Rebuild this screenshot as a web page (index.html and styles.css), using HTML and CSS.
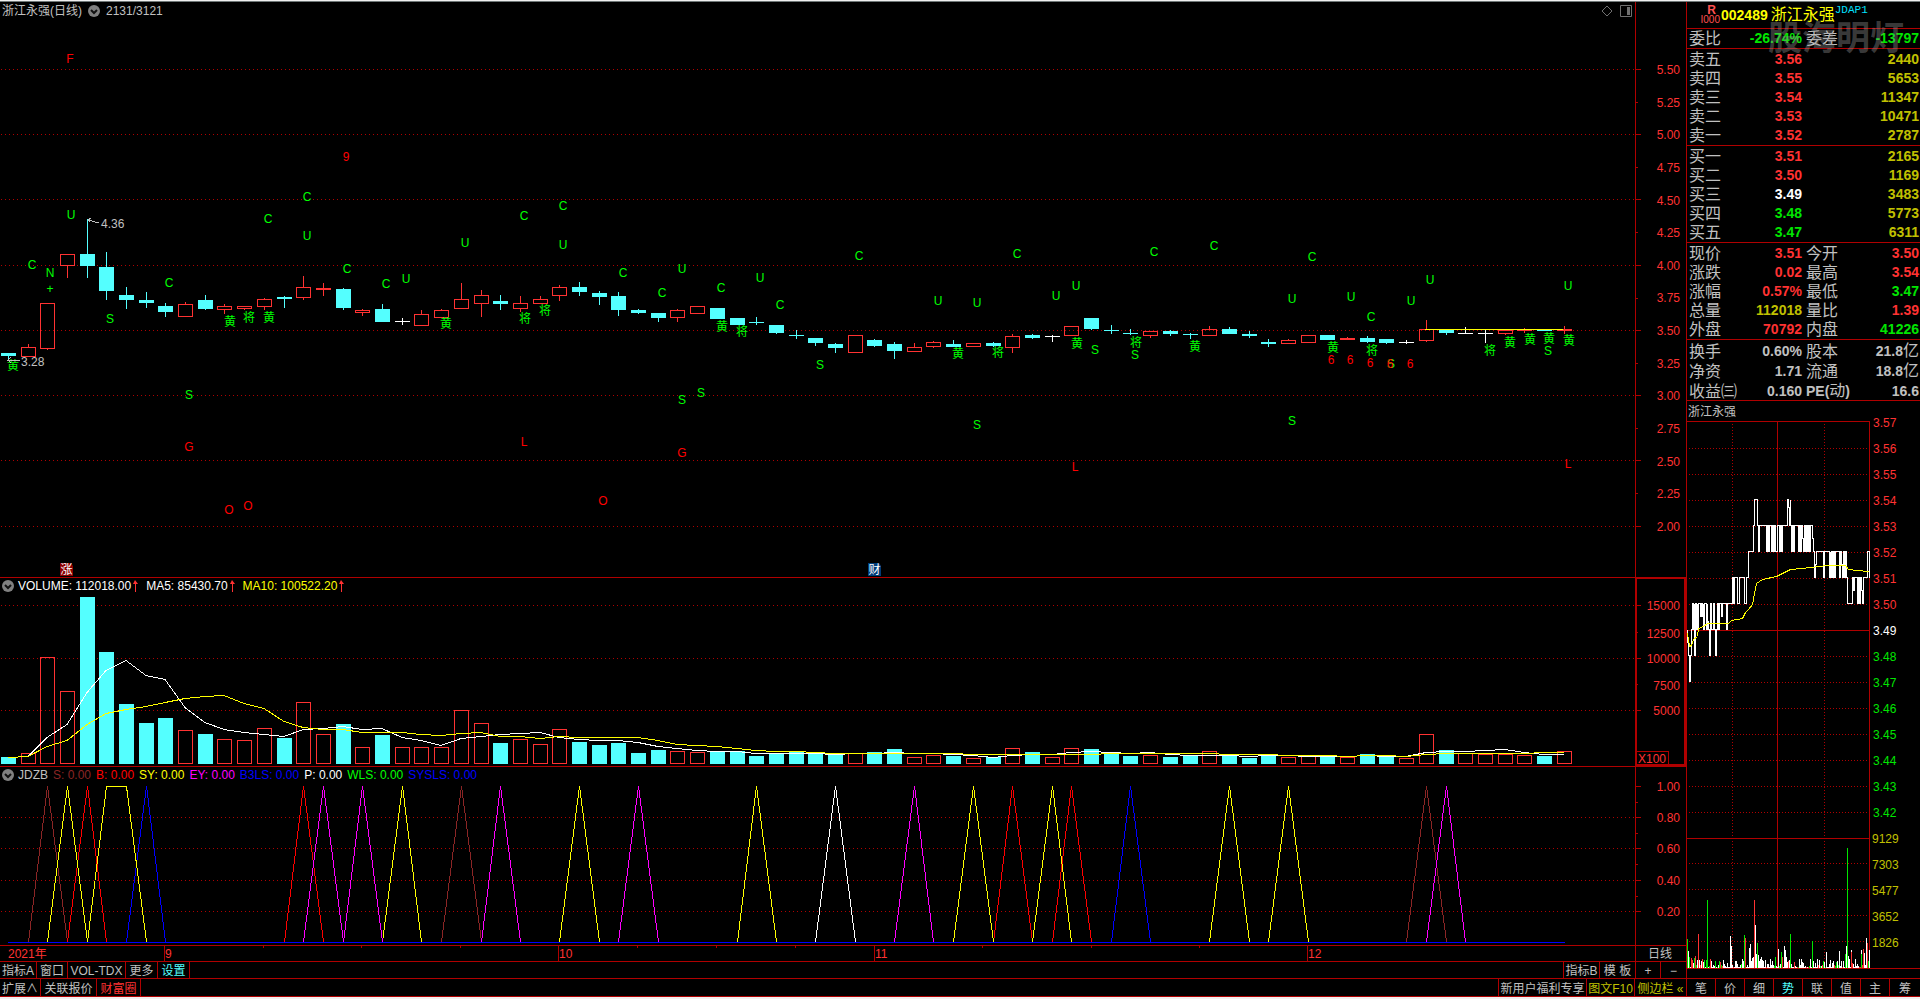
FILE: index.html
```html
<!DOCTYPE html>
<html lang="zh-CN">
<head>
<meta charset="utf-8">
<title>浙江永强 002489</title>
<link rel="stylesheet" href="styles.css">
</head>
<body>
<div class="app">
  <main class="charts">
    <section class="panel">
      <svg id="kline" class="plot" viewBox="0 2 1686 575" preserveAspectRatio="none"></svg>
      <header class="panel-head head-main">
        <span>浙江永强(日线)</span>
        <button class="toggle" aria-label="展开"><svg viewBox="0 0 12 12"><circle cx="6" cy="6" r="6"/><path d="M3 5l3 3 3-3"/></svg></button>
        <span>2131/3121</span>
        <span class="tools">
          <svg viewBox="0 0 12 12"><path d="M6 1l5 5-5 5-5-5z"/></svg>
          <svg viewBox="0 0 12 12"><path d="M.5.5h11v11H.5z"/><path class="solid" d="M7 2h3v8H7z"/></svg>
        </span>
      </header>
    </section>
    <section class="panel">
      <svg id="volume" class="plot" viewBox="0 577 1686 189" preserveAspectRatio="none"></svg>
      <header class="panel-head">
        <button class="toggle" aria-label="展开"><svg viewBox="0 0 12 12"><circle cx="6" cy="6" r="6"/><path d="M3 5l3 3 3-3"/></svg></button>
        <span class="white">VOLUME: 112018.00<svg class="up" viewBox="0 0 5 12"><path d="M2 0L5 4H3v8H2V4H0z"/></svg></span>
        <span class="white next">MA5: 85430.70<svg class="up" viewBox="0 0 5 12"><path d="M2 0L5 4H3v8H2V4H0z"/></svg></span>
        <span class="yellow next">MA10: 100522.20<svg class="up" viewBox="0 0 5 12"><path d="M2 0L5 4H3v8H2V4H0z"/></svg></span>
      </header>
    </section>
    <section class="panel">
      <svg id="signal" class="plot" viewBox="0 766 1686 179" preserveAspectRatio="none"></svg>
      <header class="panel-head">
        <button class="toggle" aria-label="展开"><svg viewBox="0 0 12 12"><circle cx="6" cy="6" r="6"/><path d="M3 5l3 3 3-3"/></svg></button>
        <span>JDZB</span>
        <span class="brown">S: 0.00</span><span class="hot">B: 0.00</span><span class="yellow">SY: 0.00</span><span class="magenta">EY: 0.00</span><span class="blue">B3LS: 0.00</span><span class="white">P: 0.00</span><span class="lime">WLS: 0.00</span><span class="blue">SYSLS: 0.00</span>
      </header>
    </section>
    <section class="panel">
      <svg id="dates" class="plot" viewBox="0 945 1686 16" preserveAspectRatio="none"></svg>
    </section>
    <nav class="bar bar-a">
      <button class="w37">指标A</button><button class="w31">窗口</button><button class="w58">VOL-TDX</button><button class="w32">更多</button><button class="w32 cyan">设置</button>
      <span class="fill"></span>
      <button class="w36">指标B</button><button class="w36">模 板</button><button class="w25">+</button><button class="w25 last">−</button>
    </nav>
    <nav class="bar bar-b">
      <button class="w41">扩展∧</button><button class="w56">关联报价</button><button class="w44 red">财富圈</button>
      <span class="fill"></span>
      <button class="w88">新用户福利专享</button><button class="w48 gold">图文F10</button><button class="w51 gold last">侧边栏 «</button>
    </nav>
  </main>

  <aside class="quote">
    <header class="stock">
      <span class="flag"><b>R</b><small>I000</small></span>
      <b class="code">002489</b><span class="name">浙江永强</span><span class="tag">JDAP1</span>
      <span class="mark">股海明灯</span>
    </header>
    <table class="rows one">
      <tr><th>委比</th><td class="green">-26.74%</td><th>委差</th><td class="green">-13797</td></tr>
    </table>
    <table class="rows">
      <tr><th>卖五</th><td class="red">3.56</td><th></th><td class="gold">2440</td></tr>
      <tr><th>卖四</th><td class="red">3.55</td><th></th><td class="gold">5653</td></tr>
      <tr><th>卖三</th><td class="red">3.54</td><th></th><td class="gold">11347</td></tr>
      <tr><th>卖二</th><td class="red">3.53</td><th></th><td class="gold">10471</td></tr>
      <tr><th>卖一</th><td class="red">3.52</td><th></th><td class="gold">2787</td></tr>
    </table>
    <table class="rows">
      <tr><th>买一</th><td class="red">3.51</td><th></th><td class="gold">2165</td></tr>
      <tr><th>买二</th><td class="red">3.50</td><th></th><td class="gold">1169</td></tr>
      <tr><th>买三</th><td class="white">3.49</td><th></th><td class="gold">3483</td></tr>
      <tr><th>买四</th><td class="green">3.48</td><th></th><td class="gold">5773</td></tr>
      <tr><th>买五</th><td class="green">3.47</td><th></th><td class="gold">6311</td></tr>
    </table>
    <table class="rows">
      <tr><th>现价</th><td class="red">3.51</td><th>今开</th><td class="red">3.50</td></tr>
      <tr><th>涨跌</th><td class="red">0.02</td><th>最高</th><td class="red">3.54</td></tr>
      <tr><th>涨幅</th><td class="red">0.57%</td><th>最低</th><td class="green">3.47</td></tr>
      <tr><th>总量</th><td class="gold">112018</td><th>量比</th><td class="red">1.39</td></tr>
      <tr><th>外盘</th><td class="red">70792</td><th>内盘</th><td class="green">41226</td></tr>
    </table>
    <table class="rows">
      <tr><th>换手</th><td>0.60%</td><th>股本</th><td>21.8<i>亿</i></td></tr>
      <tr><th>净资</th><td>1.71</td><th>流通</th><td>18.8<i>亿</i></td></tr>
      <tr><th>收益㈢</th><td>0.160</td><th><b>PE(</b>动<b>)</b></th><td>16.6</td></tr>
    </table>
    <h2 class="mini-title">浙江永强</h2>
    <div class="mini"><svg id="intraday" class="plot" viewBox="1687 421 233 557" preserveAspectRatio="none"></svg></div>
    <nav class="bar bar-b tabs">
      <button>笔</button><button>价</button><button>细</button><button class="cyan">势</button><button>联</button><button>值</button><button>主</button><button class="last">筹</button>
    </nav>
  </aside>
</div>
<script src="app.js"></script>
</body>
</html>
```
FILE: styles.css
```css
* { box-sizing: border-box; }
body {
  margin: 0;
  padding: 1px 0 2px;
  height: 100vh;
  background: #f0f0f0;
  color: #c0c0c0;
  font: 12px/16px "Liberation Sans", "Noto Sans CJK SC", sans-serif;
}
.app {
  height: 100%;
  display: grid;
  grid-template-columns: minmax(0, 1fr) 234px;
  background: #000;
  border-top: 1px solid #707878;
}
.charts {
  display: grid;
  min-height: 0;
  grid-template-rows: minmax(0, 575fr) minmax(0, 189fr) minmax(0, 179fr) 16px 17px 19px;
}
.panel { display: grid; min-height: 0; }
.panel > * { grid-area: 1 / 1; }
.plot { display: block; width: 100%; height: 100%; min-height: 0; overflow: hidden; }
.mini .plot { overflow: visible; }
.panel-head {
  display: flex;
  align-items: center;
  align-self: start;
  gap: 5px;
  height: 18px;
  padding: 0 4px 0 2px;
  white-space: nowrap;
}
.head-main { gap: 6px; }
.toggle {
  width: 12px;
  height: 12px;
  flex: none;
  padding: 0;
  border: 0;
  background: none;
}
.panel-head .toggle { margin-right: -1px; }
.head-main .toggle { margin: 0; }
.toggle svg { display: block; fill: #808080; }
.toggle path { fill: none; stroke: #111; stroke-width: 2; }
.next { margin-left: 3px; }
.up { width: 5px; height: 12px; margin-left: 2px; vertical-align: -2px; fill: #ff3232; }
.tools { display: flex; gap: 7px; margin-left: auto; margin-right: 50px; }
.tools svg { width: 12px; height: 12px; fill: none; stroke: #707070; }
.tools .solid { fill: #707070; stroke: none; }

.white { color: #fff; }
.yellow { color: #ff0; }
.brown { color: #8b2525; }
.hot { color: #f00; }
.magenta { color: #f0f; }
.blue { color: #00f; }
.lime { color: #0f0; }
.red { color: #ff3232; }
.green { color: #00e600; }
.gold { color: #c0c000; }
.cyan { color: #54ffff; }

.bar { display: flex; border-top: 1px solid #b00000; }
.bar-b { border-bottom: 1px solid #b00000; }
.bar button {
  flex: none;
  padding: 1px 0 0;
  border: 0;
  border-right: 1px solid #b00000;
  background: none;
  color: #c0c0c0;
  font: inherit;
  white-space: nowrap;
}
.bar-b button { padding-top: 2px; }
.bar .cyan { color: #54ffff; }
.bar .red { color: #ff3232; }
.bar .gold { color: #c0c000; }
.bar .last { border-right: 0; }
.fill { flex: 1; border-right: 1px solid #b00000; }
.w25 { width: 25px; }
.w31 { width: 31px; }
.w32 { width: 32px; }
.w36 { width: 36px; }
.w37 { width: 37px; }
.w41 { width: 41px; }
.w44 { width: 44px; }
.w48 { width: 48px; }
.w51 { width: 51px; }
.w56 { width: 56px; }
.w58 { width: 58px; }
.w88 { width: 88px; }

.quote {
  display: grid;
  min-height: 0;
  grid-template-rows: 26px 20px 97px 97px 97px 61px 21px minmax(0, 1fr) 19px;
  align-items: start;
  border-left: 1px solid #b00000;
}
.stock {
  position: relative;
  display: flex;
  align-items: center;
  height: 26px;
  padding-left: 17px;
  color: #ff0;
  font-size: 16px;
}
.flag { display: flex; flex-direction: column; width: 16px; color: #ff5050; line-height: 10px; text-align: right; }
.flag b { font-size: 12px; padding-right: 4px; }
.flag small { font-size: 10px; margin-left: -6px; }
.code { font-size: 14px; margin-left: 1px; }
.name { margin-left: 3px; }
.tag { align-self: start; color: #00e0ff; font: 11px/16px "Liberation Mono", monospace; }
.mark {
  position: absolute;
  top: 14px;
  right: 16px;
  color: rgba(150, 150, 150, .4);
  font: bold 34px/40px "Noto Sans CJK SC", sans-serif;
}
.rows {
  width: 100%;
  table-layout: fixed;
  border-collapse: separate;
  border-spacing: 0;
  border-top: 1px solid #b00000;
  padding-top: 1px;
  font-size: 14px;
  line-height: 19px;
}
.rows.one { padding-top: 0; }
.rows th, .rows td { height: 19px; padding: 0; white-space: nowrap; overflow: visible; }
.rows th { width: 54px; padding-left: 2px; text-align: left; font-weight: normal; font-size: 16px; }
.rows th:first-child { width: 50px; }
.rows th b { font-size: 14px; }
.rows td { text-align: right; font-weight: bold; padding-right: 1px; }
.rows td:nth-child(2) { width: 66px; }
.rows th:nth-child(3) { padding-left: 3px; }
.rows i { font: 16px "Noto Sans CJK SC", sans-serif; line-height: 16px; }
.mini-title {
  margin: 0;
  padding: 2px 0 0 1px;
  border-top: 1px solid #b00000;
  font: inherit;
  line-height: 18px;
}
.mini { min-height: 0; height: 100%; }
.tabs { height: 19px; }
.tabs button { flex: 29 1 0; }
.tabs .last { flex-grow: 31; }

svg text { font: 12px "Liberation Sans", "Noto Sans CJK SC", sans-serif; }
svg .mid { text-anchor: middle; }
svg .end { text-anchor: end; }
.shape { shape-rendering: crispEdges; fill: none; }
```
FILE: app.js
```js
const NS = 'http://www.w3.org/2000/svg';
const LINE = '#b00000', RED = '#ff3232', CYAN = '#54ffff', WHITE = '#fff', YELLOW = '#ff0', GREY = '#c0c0c0';

function add(svg, tag, attrs, text) {
  const el = document.createElementNS(NS, tag);
  for (const k in attrs) el.setAttribute(k, attrs[k]);
  if (text !== undefined) el.textContent = text;
  svg.appendChild(el);
  return el;
}
const fillRect = (s, x, y, w, h, c) => add(s, 'rect', { x, y, width: w, height: h, class: 'shape', style: `fill:${c}` });
const boxRect = (s, x, y, w, h, c) => add(s, 'rect', { x: x + .5, y: y + .5, width: w - 1, height: h - 1, stroke: c, class: 'shape' });
const poly = (s, pts, c) => add(s, 'polyline', { points: pts.map(p => p.join()).join(' '), stroke: c, class: 'shape' });
const label = (s, x, y, t, c, cls) => add(s, 'text', { x, y: y + 4.5, fill: c, class: cls || '' }, t);
const dotsH = (s, x1, x2, y, step = 4) => add(s, 'line', { x1, x2, y1: y + .5, y2: y + .5, stroke: LINE, 'stroke-dasharray': `1 ${step - 1}`, class: 'shape' });
const dotsV = (s, x, y1, y2) => add(s, 'line', { x1: x + .5, x2: x + .5, y1, y2, stroke: LINE, 'stroke-dasharray': '1 2', class: 'shape' });
const cx = i => Math.floor(8.32 + 19.695 * i);
const AX = 1635;

/* kind, body top, body bottom, wick high, wick low, volume top */
const bars = [
  ['c',353,356,353,359,757],['r',347,357,344,357,753],['r',303,349,303,350,657],['r',254,266,254,278,691],
  ['c',254,266,219,278,597],['c',267,291,252,300,652],['c',295,300,287,309,704],['c',300,303,292,308,723],
  ['c',306,312,303,317,718],['r',304,317,302,317,730],['c',300,309,295,310,734],['r',306,310,304,314,739],
  ['r',306,309,306,310,740],['r',299,307,298,310,728],['c',297,299,296,308,738],['r',287,298,276,300,702],
  ['r',288,290,283,296,734],['c',289,308,288,310,724],['r',310,313,309,316,747],['c',309,322,304,322,735],
  ['w',321,322,318,325,747],['r',314,326,310,326,747],['r',310,318,309,318,747],['r',299,309,283,309,710],
  ['r',295,304,290,317,723],['c',301,304,295,310,743],['r',303,309,296,312,739],['r',299,304,296,304,744],
  ['r',287,296,285,301,729],['c',287,292,282,296,742],['c',293,297,291,305,745],['c',296,310,292,316,743],
  ['c',310,313,309,314,753],['c',313,318,313,322,750],['r',310,318,309,322,751],['r',306,314,306,314,752],
  ['c',308,319,308,319,751],['c',318,325,318,325,751],['c',322,323,317,325,756],['c',325,333,325,334,753],
  ['c',335,336,330,339,751],['c',338,343,338,346,753],['c',344,348,343,353,755],['r',335,353,335,353,753],
  ['c',340,346,339,347,752],['c',344,351,342,359,749],['r',347,352,343,352,757],['r',342,347,341,348,755],
  ['c',344,347,340,347,756],['r',343,347,343,347,758],['c',343,346,342,347,757],['r',336,348,334,353,748],
  ['c',335,338,334,339,752],['w',336,337,335,342,757],['r',326,336,326,336,748],['c',318,329,318,330,749],
  ['c',330,331,325,334,753],['c',333,334,329,335,756],['r',331,336,331,338,755],['c',331,334,330,336,757],
  ['c',334,335,333,339,755],['r',329,336,326,336,751],['c',329,334,327,334,755],['c',334,336,331,338,758],
  ['c',342,344,339,347,755],['r',340,344,339,344,757],['r',335,343,335,343,756],['c',335,340,335,340,756],
  ['r',338,340,337,340,757],['c',338,342,336,343,754],['c',339,343,339,344,757],['w',342,343,340,344,758],
  ['r',329,341,320,342,734],['c',330,333,330,335,750],['w',333,334,327,334,753],['w',333,334,330,343,754],
  ['r',330,334,330,335,754],['r',330,331,328,333,755],['c',330,331,329,331,756],['r',329,331,326,334,751]
];

/* ---- price panel ---- */
(function () {
  const s = document.getElementById('kline');
  [69,134,199,265,330,395,460,526].forEach(y => { dotsH(s, 1, AX, y); fillRect(s, AX, y, 6, 1, LINE); });
  [102,167,232,298,363,428,493].forEach(y => fillRect(s, AX, y, 3, 1, LINE));
  fillRect(s, AX, 2, 1, 575, LINE);
  ['5.50','5.25','5.00','4.75','4.50','4.25','4.00','3.75','3.50','3.25','3.00','2.75','2.50','2.25','2.00']
    .forEach((t, k) => label(s, 1680, 69.5 + k * 32.64, t, RED, 'end'));
  bars.forEach(([k, t, b, h, l], i) => {
    const x = cx(i), c = k === 'c' ? CYAN : k === 'w' ? WHITE : RED;
    if (h < t) fillRect(s, x, h, 1, t - h, c);
    if (l > b) fillRect(s, x, b, 1, l - b, c);
    if (k === 'r' && b - t > 2) boxRect(s, x - 7, t, 15, b - t, c);
    else fillRect(s, x - 7, t, 15, b - t, c);
  });
  fillRect(s, 1425, 329, 138, 1, YELLOW);
  const marks = {
    '#f00': 'F 70 59|9 346 157|G 189 447|O 229 510|O 248 506|L 524 442|G 682 453|O 603 501|L 1075 467|6 1331 360|6 1350 360|6 1370 363|6 1390 364|6 1410 364|L 1568 464',
    '#0f0': 'C 307 197|C 268 219|U 307 236|U 71 215|C 32 265|N 50 273|+ 50 289|C 169 283|C 347 269|C 386 284|U 406 279|U 465 243|C 524 216|S 110 319|S 189 395|黄 230 321|将 249 317|黄 269 317|黄 446 323|将 525 318|将 545 310|黄 13 365|C 563 206|U 563 245|C 623 273|U 682 269|C 662 293|C 721 288|U 760 278|C 780 305|C 859 256|C 1017 254|U 938 301|U 977 303|U 1056 296|U 1076 286|黄 722 326|将 742 331|S 820 365|S 682 400|S 701 393|S 977 425|黄 958 353|将 998 352|黄 1077 343|S 1095 350|C 1154 252|C 1214 246|C 1312 257|U 1292 299|U 1351 297|C 1371 317|U 1411 301|U 1430 280|U 1568 286|将 1136 342|S 1135 355|黄 1195 346|黄 1333 347|将 1372 350|将 1490 350|黄 1510 342|黄 1530 339|黄 1549 338|S 1548 351|黄 1569 340|S 1391 364|S 1292 421'
  };
  for (const c of ['#0f0', '#f00']) marks[c].split('|').forEach(m => {
    const [t, x, y] = m.split(' ');
    label(s, +x, y - (t < '~' ? 1 : 0), t, c, 'mid');
  });
  label(s, 101, 223.5, '4.36', GREY);
  label(s, 21, 361, '3.28', GREY);
  poly(s, [[91,218],[88,220],[99,223]], GREY);
  poly(s, [[88,220],[90,222]], GREY);
  poly(s, [[11,357],[8,360],[20,360]], GREY);
  poly(s, [[8,360],[11,363]], GREY);
  add(s, 'path', { d: 'M60 563h11l2 3v10H60z', fill: '#8b0000' });
  label(s, 66.5, 569.5, '涨', WHITE, 'mid');
  add(s, 'path', { d: 'M868 563h11l2 3v10h-13z', fill: '#003c78' });
  label(s, 874.5, 569.5, '财', WHITE, 'mid');
})();

/* ---- volume panel ---- */
(function () {
  const s = document.getElementById('volume');
  fillRect(s, 0, 577, 1686, 1, LINE);
  [605,658,710].forEach(y => { dotsH(s, 1, AX, y); fillRect(s, AX, y, 6, 1, LINE); });
  [632,684].forEach(y => fillRect(s, AX, y, 3, 1, LINE));
  bars.forEach(([k,,,,, v], i) => {
    const x = cx(i) - 7;
    if (k === 'c') fillRect(s, x, v, 15, 764 - v, CYAN); else boxRect(s, x, v, 15, 764 - v, RED);
  });
  const ma5 = [757,756,737,724,692,670,660,675,679,707,722,729,732,734,736,729,728,726,729,728,737,740,745,738,736,734,733,732,737,739,740,740,742,746,748,750,751,751,753,753,753,753,754,753,753,752,753,753,754,755,757,755,754,754,752,751,752,753,752,754,755,755,755,756,755,755,756,756,756,755,756,756,752,751,751,750,749,752,754,754];
  const ma10 = [757,756,746,740,724,713,709,706,702,698,696,695,703,708,721,727,729,729,732,732,732,734,735,733,732,736,736,738,736,737,737,737,737,740,744,745,746,748,750,751,751,752,753,753,753,753,753,753,753,754,754,754,754,754,754,754,753,753,753,753,753,753,754,754,754,755,755,755,756,755,755,756,754,753,753,753,753,753,752,752];
  poly(s, ma5.map((y, i) => [cx(i), y + .5]), WHITE);
  poly(s, ma10.map((y, i) => [cx(i), y + .5]), YELLOW);
  fillRect(s, AX, 577, 2, 189, LINE);
  fillRect(s, 1684, 577, 2, 189, LINE);
  fillRect(s, AX, 577, 51, 2, LINE);
  fillRect(s, AX, 764, 51, 2, LINE);
  [['15000',605.5],['12500',633.5],['10000',658.5],['7500',685.5],['5000',710.5]].forEach(([t, y]) => label(s, 1680, y, t, RED, 'end'));
  boxRect(s, 1636, 751, 33, 15, LINE);
  label(s, 1638, 758.5, 'X100', RED);
})();

/* ---- signal panel ---- */
(function () {
  const s = document.getElementById('signal');
  fillRect(s, 0, 766, 1686, 1, LINE);
  fillRect(s, AX, 766, 1, 179, LINE);
  [817,848,880,911].forEach(y => dotsH(s, 1, AX, y));
  [786,817,848,880,911].forEach((y, k) => {
    fillRect(s, AX, y, 6, 1, LINE);
    if (k < 4) fillRect(s, AX, y + 16, 3, 1, LINE);
    label(s, 1680, y + .5, ['1.00','0.80','0.60','0.40','0.20'][k], RED, 'end');
  });
  const peaks = [
    ['#8b2525', [2,23,72]], ['#f00', [4,15,51,54]], ['#ff0', [3,20,29,38,49,53,62,65]],
    ['#f0f', [16,18,25,32,46,73]], ['#00f', [7,57]], ['#fff', [42]]
  ];
  peaks.forEach(([c, list]) => list.forEach(i => poly(s, [[cx(i - 1) + .5, 942], [cx(i) + .5, 786], [cx(i + 1) + .5, 942]], c)));
  poly(s, [[cx(4) + .5, 942], [cx(5) + .5, 786.5], [cx(6) + .5, 786.5], [cx(7) + .5, 942]], '#ff0');
  fillRect(s, 8, 942, 1557, 1, '#00f');
})();

/* ---- date axis ---- */
(function () {
  const s = document.getElementById('dates');
  fillRect(s, 0, 945, 1686, 1, LINE);
  fillRect(s, AX, 945, 1, 16, LINE);
  [263,361,460,637,716,795,982,1091,1199].forEach(x => fillRect(s, x, 946, 1, 2, LINE));
  [[164,'9'],[558,'10'],[874,'11'],[1307,'12']].forEach(([x, t]) => { fillRect(s, x, 946, 1, 15, LINE); label(s, x + 1, 953.5, t, RED); });
  label(s, 8, 953.5, '2021年', RED);
  label(s, 1648, 953.5, '日线', GREY);
})();

/* ---- intraday panel ---- */
(function () {
  const s = document.getElementById('intraday');
  const X = v => 1680 + Math.floor(v / 3);
  fillRect(s, 1687, 421, 183, 1, LINE);
  [448,474,500,526,552,578,604,656,682,708,734,760,786,812,863,889,915,941].forEach(y => dotsH(s, 1689, 1868, y, 3));
  dotsV(s, 1732, 424, 968);
  dotsV(s, 1824, 424, 968);
  [1777, 1869].forEach(x => fillRect(s, x, 421, 1, 547, LINE));
  [630, 838, 968].forEach(y => fillRect(s, 1687, y, 183, 1, LINE));
  fillRect(s, 1869, 968, 51, 1, LINE);
  for (let k = 0; k < 16; k++) {
    const p = 357 - k, c = p > 349 ? RED : p === 349 ? WHITE : '#00e600';
    label(s, 1873, 422 + k * 26, (p / 100).toFixed(2), c);
  }
  ['9129','7303','5477','3652','1826'].forEach((t, k) => label(s, 1872, 838 + k * 26, t, '#c0c000'));

  const price = '22,49 22,48.5 25,48 28,47 31,48 34,49 37,50 40,49 43,50 43,48 46,49 46,50 49,49 52,50 52,49 55,50 61,50 61,49.5 64,50 67,49.5 70,50 70,49 73,50 76,50 79,49 82,50 82,49.3 85,49 88,48 91,50 94,49 97,49 100,50 103,49 106,48 109,49 112,50 115,49 118,50 124,50 124,49.5 127,50 139,50 139,49 142,50 154,50 157,51 160,50 163,51 169,51 172,50 175,50 178,51 190,51 193,50 196,50 199,51 202,51 205,52 217,52 220,53 223,54 229,54 232,53 235,52 238,53 256,53 259,52 262,53 265,52 268,53 274,53 274,52 277,53 280,52 283,53 286,52 289,52 292,53 298,52 301,53 304,52 307,53 322,53 322,54 325,54 325,53.7 328,53 331,54 331,53 334,52 337,53 340,52 343,53 352,53 355,52 358,53 361,52 364,53 367,52.5 370,52 373,53 376,52 379,53 382,52 385,53 388,52 391,53 394,53 397,52.5 400,52 403,51 406,51.5 409,52 430,52 430,51 433,52 448,52 448,51 451,52 451,51 454,52 457,51 460,52 463,51 466,52 475,52 478,51 481,52 484,51.5 487,51 490,52 493,51 496,52 499,51 502,50 514,50 517,51 520,50.5 523,51 529,51 532,50 535,51 538,50 541,51 544,50.5 547,50 550,51 559,51 562,52 565,52 568,51.5 568,51';
  const pts = [];
  price.split(' ').forEach(p => {
    const [x, l] = p.split(',').map(Number);
    const q = [X(x) + .5, Math.round(630 - (l - 49) * 26) - .5];
    if (pts.length) pts.push([q[0], pts[pts.length - 1][1]]);
    pts.push(q);
  });
  poly(s, pts, WHITE);
  poly(s, [[22,700],[28,737],[34,735],[40,716],[52,708],[55,685],[70,677],[82,668],[145,670],[155,661],[187,655],[195,635],[205,628],[218,612],[224,580],[230,548],[248,538],[290,529],[330,508],[395,500],[440,496],[495,496],[505,506],[530,510],[568,512]]
    .map(([x, y]) => [X(x) + .5, 400.5 + Math.round(y / 3)]), YELLOW);

  /* per-minute volume: a low noise floor under the notable minutes */
  const cols = [WHITE, WHITE, WHITE, '#00e600', RED, WHITE, WHITE];
  let seed = 7;
  const rnd = () => (seed = (seed * 16807) % 2147483647) / 2147483647;
  for (let x = 1687; x < 1869; x++) {
    const h = 1 + Math.floor(Math.pow(rnd(), 3) * 9);
    fillRect(s, x, 968 - h, 1, h, cols[Math.floor(rnd() * 7)]);
  }
  const G = '#00e600';
  [[22,747,G],[25,783,WHITE],[28,800,G],[34,804,RED],[37,810,RED],[43,804,G],[46,798,RED],[55,732,RED],[58,810,WHITE],[67,807,RED],[73,810,G],[82,630,G],[91,807,RED],[106,813,G],[151,738,WHITE],[154,768,WHITE],[187,807,WHITE],[190,815,WHITE],[193,735,G],[196,744,RED],[208,774,WHITE],[211,762,WHITE],[214,812,WHITE],[217,804,WHITE],[220,800,WHITE],[223,630,RED],[226,705,WHITE],[229,792,WHITE],[232,759,G],[235,795,WHITE],[244,801,WHITE],[247,810,WHITE],[256,810,WHITE],[286,801,G],[295,777,WHITE],[304,786,G],[307,801,RED],[313,768,WHITE],[316,780,WHITE],[319,801,WHITE],[331,732,G],[343,816,RED],[364,807,WHITE],[367,815,WHITE],[397,753,G],[400,814,WHITE],[418,810,WHITE],[430,813,G],[439,786,WHITE],[478,783,WHITE],[496,792,G],[499,768,WHITE],[502,474,G],[505,798,WHITE],[508,807,WHITE],[514,780,WHITE],[515,786,RED],[526,807,WHITE],[544,780,WHITE],[545,792,G],[550,777,RED],[553,789,WHITE],[559,744,WHITE],[562,759,RED],[568,780,WHITE]]
    .forEach(([x, y, c]) => { const t = 690 + Math.round(y / 3); fillRect(s, X(x), t, 1, 968 - t, c); });
})();
```
